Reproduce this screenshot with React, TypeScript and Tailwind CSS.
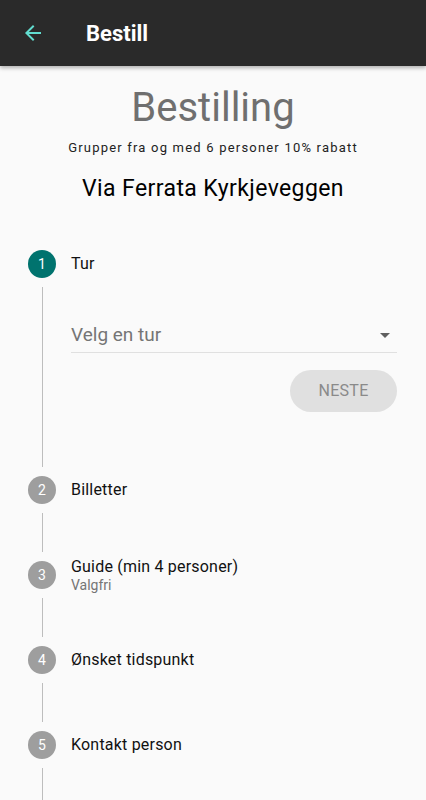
const font = { fontFamily: "Roboto, 'Liberation Sans', sans-serif" };

type Step = { n: number; title: string; sub?: string; active?: boolean };

const steps: Step[] = [
  { n: 2, title: "Billetter" },
  { n: 3, title: "Guide (min 4 personer)", sub: "Valgfri" },
  { n: 4, title: "Ønsket tidspunkt" },
  { n: 5, title: "Kontakt person" },
];

function StepHeader({ step }: { step: Step }) {
  return (
    <div className="flex h-7 items-center">
      <div
        className={
          step.active
            ? "flex h-7 w-7 shrink-0 items-center justify-center rounded-full bg-[#00736e] text-[14px] text-white"
            : "flex h-7 w-7 shrink-0 items-center justify-center rounded-full bg-[#9e9e9e] text-[14px] text-white"
        }
      >
        {step.n}
      </div>
      <div className="ml-[15px] flex flex-col">
        <span className="text-[16px] leading-5 tracking-[0.2px] text-[#111]">{step.title}</span>
        {step.sub && <span className="text-[14px] leading-4 text-[#757575]">{step.sub}</span>}
      </div>
    </div>
  );
}

function Connector({ height }: { height: string }) {
  return (
    <div className="flex w-7 shrink-0 justify-center">
      <div className={`my-[9px] w-px bg-[#bdbdbd] ${height}`} />
    </div>
  );
}

export default function App() {
  return (
    <div className="min-h-[800px] w-full overflow-hidden bg-[#fafafa]" style={font}>
      {/* App bar */}
      <div className="relative z-10 flex h-[66px] items-center bg-[#2a2a2a] shadow-[0_2px_4px_rgba(0,0,0,0.3)]">
        <svg className="ml-[21px]" width="24" height="24" viewBox="0 0 24 24">
          <path d="M20 11H7.83l5.59-5.59L12 4l-8 8 8 8 1.41-1.41L7.83 13H20v-2z" fill="#62ddd0" />
        </svg>
        <span className="ml-[41px] text-[22px] font-bold text-white">Bestill</span>
      </div>

      {/* Heading */}
      <div className="flex flex-col items-center">
        <h1 className="mt-[20px] text-[40px] leading-[44px] text-[#6f6f6f]">Bestilling</h1>
        <p className="mt-[10px] text-[13px] leading-4 tracking-[1.2px] text-[#222]">
          Grupper fra og med 6 personer 10% rabatt
        </p>
        <h2 className="mt-[19px] text-[23px] leading-7 tracking-[0.4px] text-black">Via Ferrata Kyrkjeveggen</h2>
      </div>

      {/* Stepper */}
      <div className="mt-[47px] px-[28px]">
        <StepHeader step={{ n: 1, title: "Tur", active: true }} />
        <div className="flex">
          <Connector height="h-[180px]" />
          <div className="ml-[15px] flex flex-1 flex-col pr-[1px]">
            <div className="mt-[41px] flex h-[34px] items-center justify-between border-b border-[#e0e0e0]">
              <span className="text-[19px] text-[#757575]">Velg en tur</span>
              <svg className="mr-[7px]" width="10" height="5" viewBox="0 0 10 5">
                <path d="M0 0h10L5 5z" fill="#5f5f5f" />
              </svg>
            </div>
            <div className="mt-[17px] flex justify-end">
              <button className="h-[42px] w-[107px] rounded-full bg-[#e0e0e0] text-[16px] tracking-[0.3px] text-[#8a8a8a]">
                NESTE
              </button>
            </div>
          </div>
        </div>
        {steps.map((s) => (
          <div key={s.n}>
            <StepHeader step={s} />
            <div className="flex">
              <Connector height="h-[39px]" />
            </div>
          </div>
        ))}
      </div>
    </div>
  );
}
